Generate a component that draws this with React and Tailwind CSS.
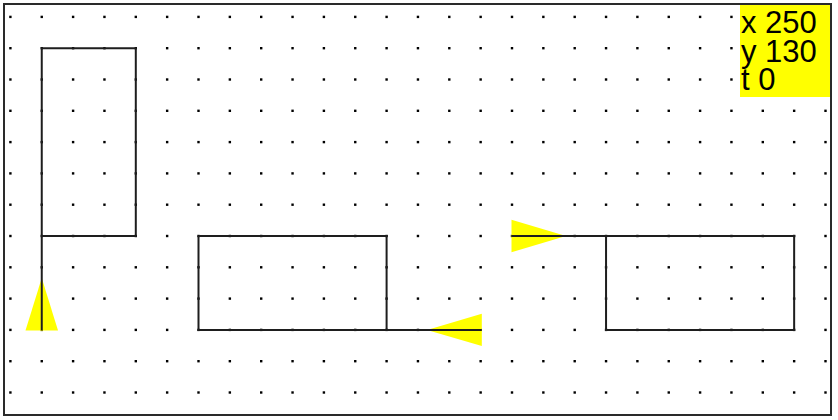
import React from "react";

const X = (i) => 10.4 + 31.35 * i;
const Y = (j) => 16.9 + 31.3 * j;

function Drawing() {
  const dots = [];
  for (let j = 0; j < 13; j++) {
    for (let i = 0; i < 27; i++) {
      dots.push(
        <rect key={`${i}-${j}`} x={X(i) - 1.2} y={Y(j) - 1.2} width="2.4" height="2.4" fill="#000" />
      );
    }
  }
  const stroke = { stroke: "#1e1e1e", strokeWidth: 2, fill: "none" };
  return (
    <svg className="absolute left-0 top-0" width="838" height="420" viewBox="0 0 838 420">
      {dots}
      <polygon points={`${X(1)},278 25.5,330.5 58,330.5`} fill="#ffff00" />
      <polygon points={`427,${Y(10)} 481.8,313.8 481.8,346`} fill="#ffff00" />
      <polygon points={`566,${Y(7)} 511.5,219.8 511.5,252.2`} fill="#ffff00" />
      <polyline
        points={`${X(1)},${Y(10)} ${X(1)},${Y(1)} ${X(4)},${Y(1)} ${X(4)},${Y(7)} ${X(1)},${Y(7)}`}
        {...stroke}
      />
      <polyline
        points={`${X(6)},${Y(7)} ${X(12)},${Y(7)} ${X(12)},${Y(10)} ${X(6)},${Y(10)} ${X(6)},${Y(7)}`}
        {...stroke}
      />
      <line x1={X(12)} y1={Y(10)} x2="481.8" y2={Y(10)} {...stroke} />
      <line x1="511.5" y1={Y(7)} x2={X(25)} y2={Y(7)} {...stroke} />
      <polyline
        points={`${X(19)},${Y(7)} ${X(25)},${Y(7)} ${X(25)},${Y(10)} ${X(19)},${Y(10)} ${X(19)},${Y(7)}`}
        {...stroke}
      />
    </svg>
  );
}

export default function App() {
  return (
    <div className="relative w-[838px] h-[420px] bg-white overflow-hidden">
      <div className="ml-[3px] mt-[3px] w-[829px] h-[413px] border-2 border-[#2a2a2a]" />
      <Drawing />
      <div
        className="absolute left-[740px] top-[5px] w-[90px] h-[92px] bg-[#ffff00] pl-[1px] pt-[4px] text-black text-[31px] leading-[28.5px] whitespace-pre"
        style={{ fontFamily: '"Liberation Sans", Arial, sans-serif' }}
      >
        <div>x 250</div>
        <div>y 130</div>
        <div>t 0</div>
      </div>
    </div>
  );
}
